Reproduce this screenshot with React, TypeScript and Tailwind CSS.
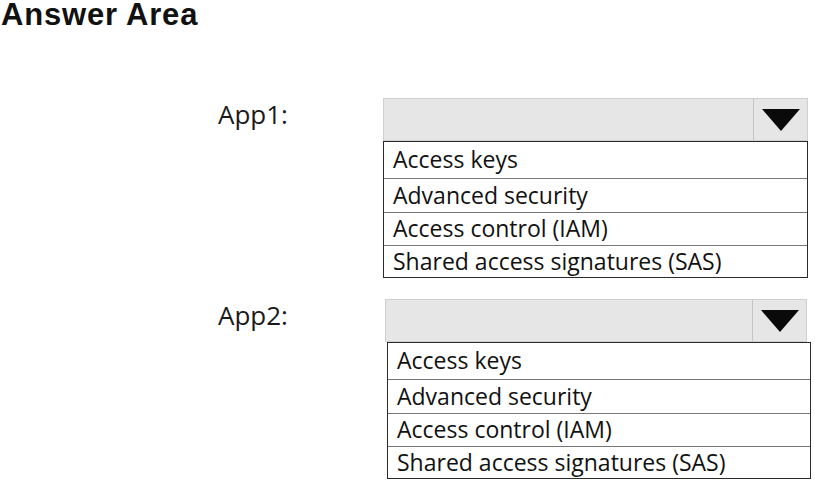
const options = [
  "Access keys",
  "Advanced security",
  "Access control (IAM)",
  "Shared access signatures (SAS)",
];

const rowHeights = ["h-[36px] leading-[35px]", "h-[34px] leading-[32px]", "h-[33px] leading-[31px]", "h-[32px] leading-[30px]"];

function Dropdown({ label, shift }: { label: string; shift?: boolean }) {
  return (
    <div className="flex">
      <div className="w-[218px] shrink-0" />
      <div className="w-[165px] shrink-0 text-[26px] leading-[32px] text-[#1a1a1a]">{label}</div>
      <div className={shift ? "ml-[2px] w-[422px]" : "w-[425px]"}>
        <div className="flex h-[43px] border border-[#cfcfcf] bg-[#e6e6e6]">
          <div className="flex-1" />
          <div className="flex w-[54px] items-center justify-center border-l border-[#c4c4c4]">
            <svg width="38" height="22" viewBox="0 0 38 22">
              <polygon points="0,0 38,0 19,22" fill="#0a0a0a" />
            </svg>
          </div>
        </div>
        <div
          className={
            shift
              ? "ml-[2px] w-[424px] border-[1.5px] border-[#2a2a2a] bg-white"
              : "border-[1.5px] border-[#2a2a2a] bg-white"
          }
        >
          {options.map((o, i) => (
            <div
              key={o}
              className={
                (i === 0 ? "" : "border-t border-[#777] ") +
                rowHeights[i] +
                " pl-[9px] text-[23px] text-[#111]"
              }
            >
              {o}
            </div>
          ))}
        </div>
      </div>
    </div>
  );
}

export default function App() {
  return (
    <div className="h-[480px] w-[815px] overflow-hidden bg-white" style={{ fontFamily: '"Open Sans", sans-serif' }}>
      <h1
        className="pl-[1px] text-[31px] font-bold leading-[30px] tracking-[0.8px] text-[#111]"
        style={{ fontFamily: '"Liberation Sans", Arial, sans-serif' }}
      >
        Answer Area
      </h1>
      <div className="mt-[68px] flex flex-col gap-[21px]">
        <Dropdown label="App1:" />
        <Dropdown label="App2:" shift />
      </div>
    </div>
  );
}
